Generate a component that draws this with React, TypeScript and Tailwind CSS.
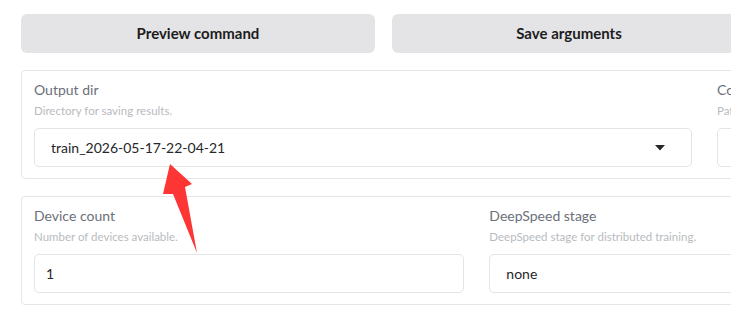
import React from "react";

function Field({ label, desc, children }: { label: string; desc: string; children: React.ReactNode }) {
  return (
    <div className="flex flex-col">
      <div className="text-[14px] leading-[18px] text-[#6b6f78]">{label}</div>
      <div className="mt-[4px] text-[11.5px] leading-[16px] text-[#b8bbc0]">{desc}</div>
      <div className="mt-[9px]">{children}</div>
    </div>
  );
}

function Dropdown({ value }: { value: string }) {
  return (
    <div className="flex h-[39px] items-center justify-between rounded-[5px] border border-[#e3e4e8] bg-white pl-[16px] pr-[26px] text-[14px] text-[#27272a]">
      <span>{value}</span>
      <svg width="10" height="6" viewBox="0 0 10 6">
        <polygon points="0,0 10,0 5,5.5" fill="#27272a" />
      </svg>
    </div>
  );
}

function NumberInput({ value }: { value: string }) {
  return (
    <div className="flex h-[39px] items-center rounded-[5px] border border-[#e3e4e8] bg-white pl-[11px] text-[14px] text-[#27272a]">
      {value}
    </div>
  );
}

export default function App() {
  return (
    <div className="relative h-[335px] w-[731px] overflow-hidden bg-white" style={{ fontFamily: "Lato, 'Open Sans', sans-serif" }}>
      <div className="w-[1420px] px-[21px] pt-[14px]">
        <div className="flex gap-[17px]">
          <button className="h-[39px] w-[354px] rounded-[6px] bg-[#e4e4e7] text-[15px] font-bold text-[#1c1c1c]">Preview command</button>
          <button className="h-[39px] w-[354px] rounded-[6px] bg-[#e4e4e7] text-[15px] font-bold text-[#1c1c1c]">Save arguments</button>
          <button className="h-[39px] w-[354px] rounded-[6px] bg-[#e4e4e7] text-[15px] font-bold text-[#1c1c1c]">Load arguments</button>
        </div>

        <div className="mt-[17px] w-[1367px] rounded-[4px] border border-[#e5e6ea] px-[12px] pt-[10px] pb-[11px]">
          <div className="grid grid-cols-2 gap-[25px]">
            <Field label="Output dir" desc="Directory for saving results.">
              <Dropdown value="train_2026-05-17-22-04-21" />
            </Field>
            <Field label="Config path" desc="Path to config saving arguments.">
              <Dropdown value="2026-05-17-22-04-21.yaml" />
            </Field>
          </div>
        </div>

        <div className="mt-[17px] w-[1367px] rounded-[4px] border border-[#e5e6ea] px-[12px] pt-[10px] pb-[11px]">
          <div className="grid grid-cols-3 gap-[25px]">
            <Field label="Device count" desc="Number of devices available.">
              <NumberInput value="1" />
            </Field>
            <Field label="DeepSpeed stage" desc="DeepSpeed stage for distributed training.">
              <Dropdown value="none" />
            </Field>
            <Field label="Enable offload" desc="Enable DeepSpeed offload (slow down training).">
              <NumberInput value="" />
            </Field>
          </div>
        </div>
      </div>

      <svg className="pointer-events-none absolute left-0 top-0" width="731" height="335" viewBox="0 0 731 335">
        <polygon points="170,164 192,184 185,187 197,253 173,194 163,194" fill="#fd3535" />
      </svg>
    </div>
  );
}
